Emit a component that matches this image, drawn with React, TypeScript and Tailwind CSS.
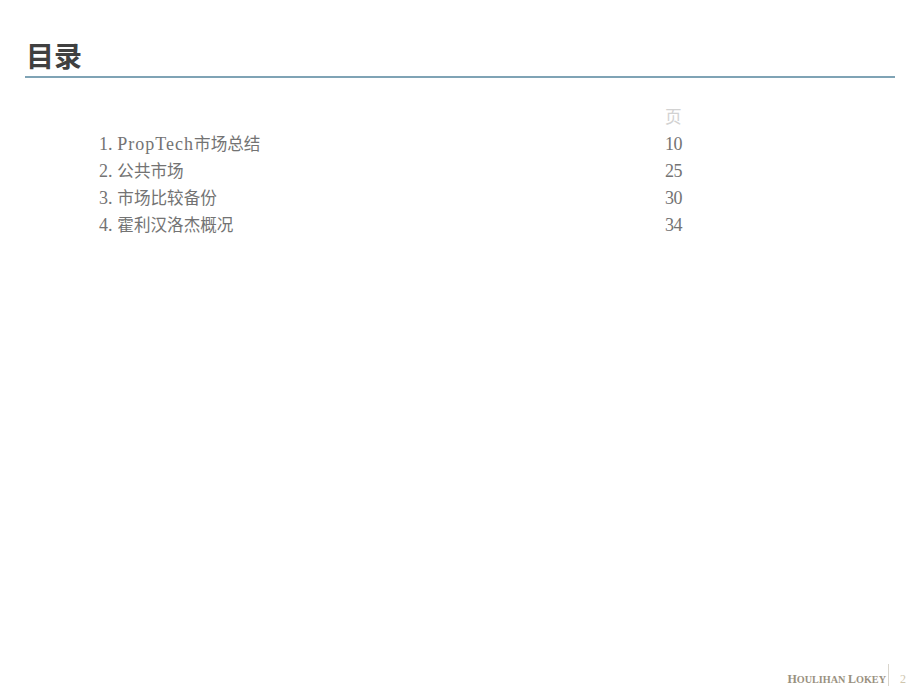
const rows = [
  { num: '1. ', latin: 'PropTech', label: '市场总结', page: '10' },
  { num: '2. ', latin: '', label: '公共市场', page: '25' },
  { num: '3. ', latin: '', label: '市场比较备份', page: '30' },
  { num: '4. ', latin: '', label: '霍利汉洛杰概况', page: '34' },
];

const serif = "font-['Liberation_Serif','Noto_Sans_CJK_SC',serif]";

export default function App() {
  return (
    <div className={`h-[690px] w-[920px] overflow-hidden bg-white flex flex-col ${serif}`}>
      {/* Title */}
      <div className="mx-[25px] mt-[36px] h-[42px] border-b-2 border-[#7fa3b5]">
        <h1 className="pl-px text-[28px] leading-[38px] font-bold text-[#404040] font-['Noto_Sans_CJK_SC',sans-serif]">目录</h1>
      </div>

      {/* Contents */}
      <div className="mt-[26px] ml-[99px] grid grid-cols-[566px_60px] auto-rows-[27px] text-[16.6px] leading-[27px] text-[#737373]">
        <div />
        <div className="text-[#d2d2d2]">页</div>
        {rows.map((row) => (
          <div key={row.page} className="contents">
            <div className="whitespace-pre">
              <span className="text-[18px] tracking-[0.1px]">{row.num}</span>
              {row.latin && <span className="text-[18px] tracking-[1px]">{row.latin}</span>}
              {row.label}
            </div>
            <div className="text-[18px] tracking-[-0.6px]">{row.page}</div>
          </div>
        ))}
      </div>

      {/* Footer */}
      <div className="mt-auto flex h-[26px] items-center justify-end pb-px">
        <span className="translate-y-[2px] text-[10.2px] font-bold text-[#9a917f]">
          <span className="text-[12px]">H</span>OULIHAN <span className="text-[12px]">L</span>OKEY
        </span>
        <div className="ml-[2px] h-[22px] w-px self-start bg-[#d9d5cc]" />
        <span className="ml-[11px] mr-[14px] translate-y-[2px] text-[12px] text-[#cfc6ae]">2</span>
      </div>
    </div>
  );
}
